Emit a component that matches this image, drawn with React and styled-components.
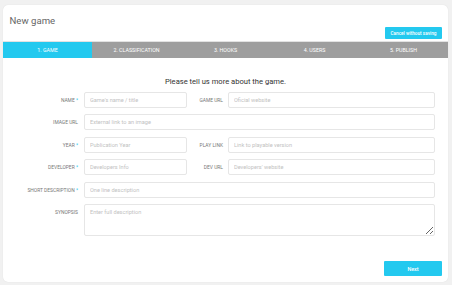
import React from 'react';
import styled, { createGlobalStyle } from 'styled-components';

const CYAN = '#23c9ef';

const tabs = ['1. Game', '2. Classification', '3. Hooks', '4. Users', '5. Publish'];

const GlobalStyle = createGlobalStyle`
  html, body {
    margin: 0;
    padding: 0;
    background: #f1f1f1;
    font-family: Roboto, "Liberation Sans", sans-serif;
  }
`;

function Field({ label, required, placeholder, wide, area }) {
  return (
    <>
      <Label $top={area}>
        {label}
        {required && <Star> *</Star>}
      </Label>
      {area ? (
        <TextArea placeholder={placeholder} />
      ) : (
        <Input placeholder={placeholder} $wide={wide} />
      )}
    </>
  );
}

function SideField({ label, placeholder }) {
  return (
    <>
      <SideLabel>{label}</SideLabel>
      <Input placeholder={placeholder} />
    </>
  );
}

export default function App() {
  return (
    <>
      <GlobalStyle />
      <Card>
        <Header>
          <Title>New game</Title>
          <SmallButton>Cancel without saving</SmallButton>
        </Header>
        <TabBar>
          {tabs.map((t, i) => (
            <Tab key={t} $active={i === 0}>
              {t}
            </Tab>
          ))}
        </TabBar>
        <Body>
          <Heading>Please tell us more about the game.</Heading>
          <Form>
            <Field label="Name" required placeholder="Game's name / title" />
            <SideField label="Game URL" placeholder="Oficial website" />
            <Field label="Image URL" placeholder="External link to an image" wide />
            <Field label="Year" required placeholder="Publication Year" />
            <SideField label="Play link" placeholder="Link to playable version" />
            <Field label="Developer" required placeholder="Developers Info" />
            <SideField label="Dev URL" placeholder="Developers' website" />
            <Field label="Short description" required placeholder="One line description" wide />
            <Field label="Synopsis" placeholder="Enter full description" area />
          </Form>
          <Footer>
            <NextButton>Next</NextButton>
          </Footer>
        </Body>
      </Card>
    </>
  );
}

const Card = styled.div`
  margin: 5px 4px 3px 3px;
  height: 277px;
  box-sizing: border-box;
  background: #fff;
  border-radius: 5px;
  box-shadow: 0 0 1px rgba(0, 0, 0, 0.12);
  overflow: hidden;
  display: flex;
  flex-direction: column;
`;

const Header = styled.div`
  height: 36px;
  box-sizing: border-box;
  padding: 10px 6px 2px 6.5px;
  display: flex;
  justify-content: space-between;
  align-items: flex-start;
`;

const Title = styled.h1`
  margin: 0;
  font-size: 9.6px;
  line-height: 12px;
  font-weight: 400;
  color: #666;
`;

const SmallButton = styled.button`
  align-self: flex-end;
  height: 12px;
  width: 57px;
  padding: 0;
  border: none;
  border-radius: 1px;
  background: ${CYAN};
  color: #fff;
  font-family: inherit;
  font-size: 4.7px;
  font-weight: 500;
`;

const TabBar = styled.div`
  display: grid;
  grid-template-columns: repeat(5, 1fr);
  border-top: 1px solid #e2e2e2;
  height: 16px;
`;

const Tab = styled.div`
  display: flex;
  align-items: center;
  justify-content: center;
  background: ${(p) => (p.$active ? CYAN : '#9e9e9e')};
  color: #fff;
  text-transform: uppercase;
  font-size: 5.3px;
  font-weight: 400;
`;

const Body = styled.div`
  flex: 1;
  display: flex;
  flex-direction: column;
  padding: 19px 13px 6px 0;
`;

const Heading = styled.p`
  margin: 0 0 5px 13px;
  text-align: center;
  font-size: 7.6px;
  line-height: 10px;
  color: #333;
`;

const Form = styled.div`
  display: grid;
  grid-template-columns: 81px 103px 41px 1fr;
  grid-auto-rows: 16px;
  row-gap: 6.4px;
  & > :nth-last-child(1) {
    height: 32px;
  }
`;

const Label = styled.label`
  grid-column: 1;
  align-self: ${(p) => (p.$top ? 'start' : 'center')};
  line-height: 16px;
  padding-right: 6px;
  text-align: right;
  text-transform: uppercase;
  font-size: 4.9px;
  font-weight: 400;
  color: #777;
  white-space: nowrap;
`;

const SideLabel = styled(Label)`
  grid-column: 3;
  padding-right: 5px;
`;

const Star = styled.span`
  color: ${CYAN};
`;

const fieldCss = `
  box-sizing: border-box;
  width: 100%;
  margin: 0;
  border: 1px solid #e6e6e6;
  border-radius: 2px;
  padding: 0 5px;
  font-family: Roboto, "Liberation Sans", sans-serif;
  font-size: 5.6px;
  color: #333;
  outline: none;
  &::placeholder {
    color: #c2c2c2;
  }
`;

const Input = styled.input`
  ${fieldCss}
  height: 16px;
  grid-column: ${(p) => (p.$wide ? '2 / 5' : 'auto')};
`;

const TextArea = styled.textarea`
  ${fieldCss}
  grid-column: 2 / 5;
  height: 32px;
  padding-top: 4px;
  resize: vertical;
`;

const Footer = styled.div`
  margin-top: auto;
  display: flex;
  justify-content: flex-end;
  margin-right: -7px;
`;

const NextButton = styled.button`
  width: 58px;
  height: 15px;
  padding: 0;
  border: none;
  border-radius: 1px;
  background: ${CYAN};
  color: #fff;
  font-family: inherit;
  font-size: 5.4px;
  font-weight: 500;
`;
